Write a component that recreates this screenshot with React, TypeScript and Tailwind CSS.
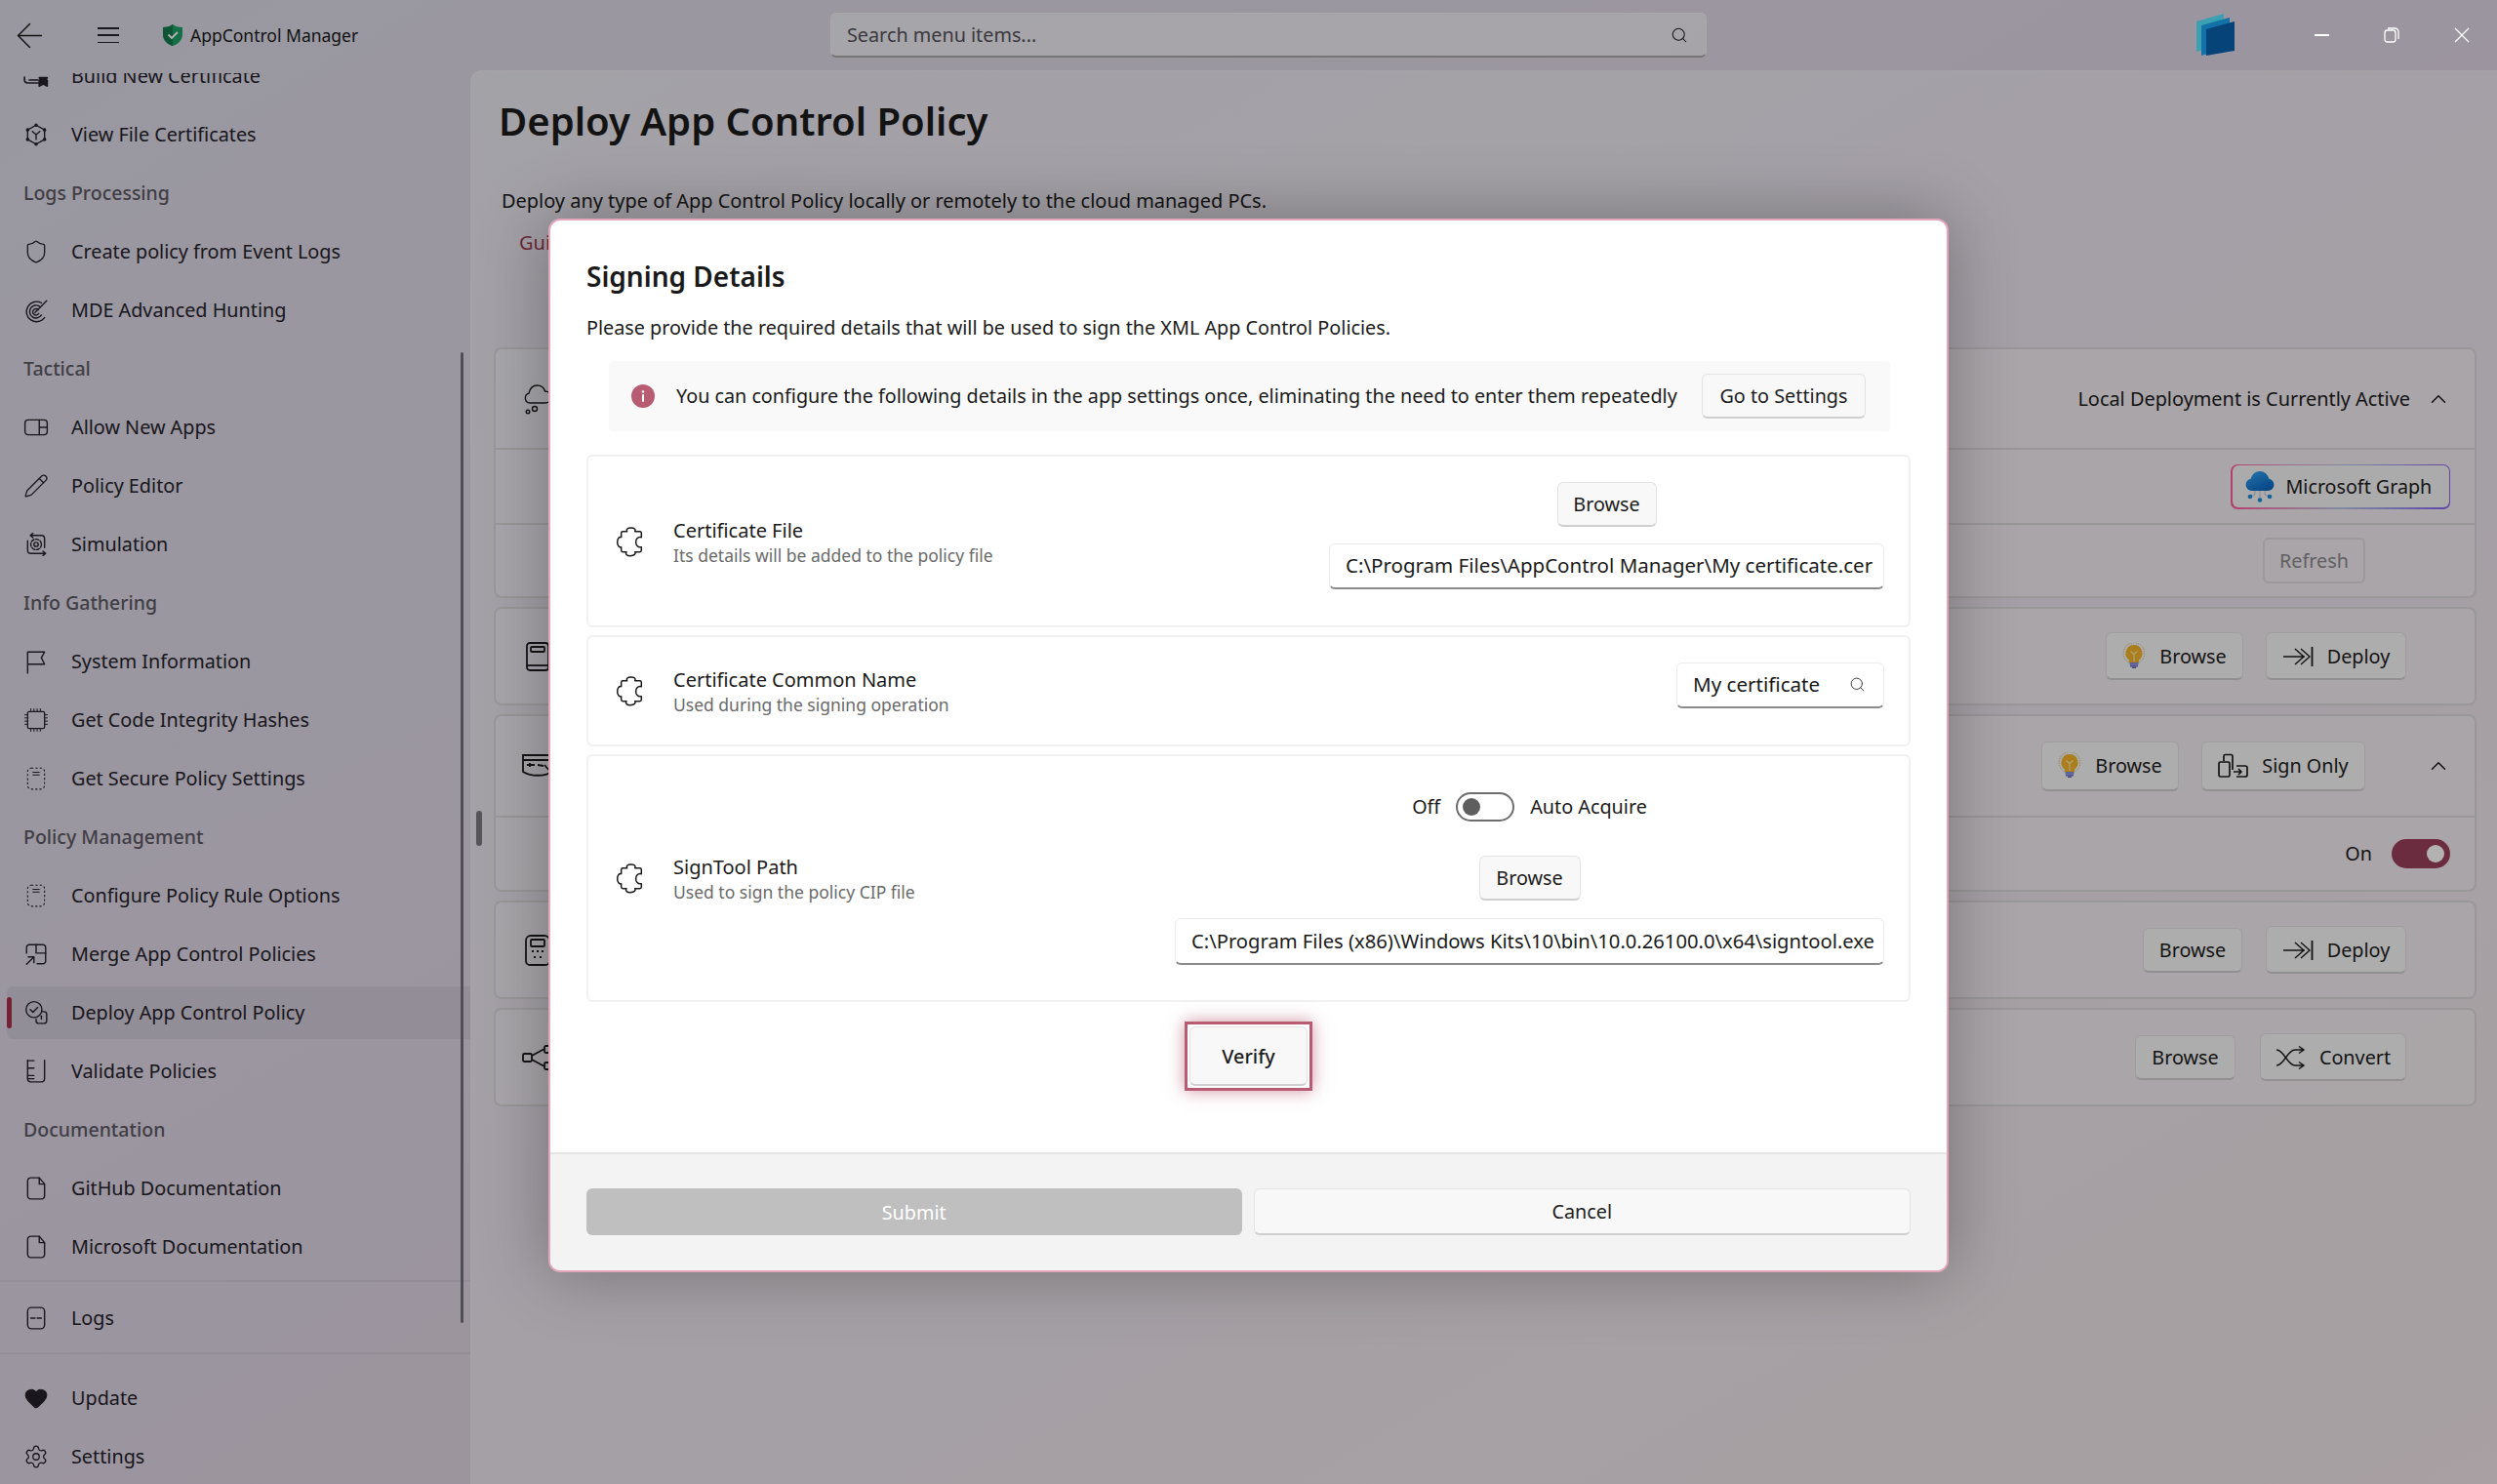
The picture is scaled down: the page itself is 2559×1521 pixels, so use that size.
import type { ReactNode } from "react";
import { ArrowLeft, ChevronUp, Heart, Pencil, Search, Settings, Shield } from "lucide-react";

const Ico = ({ children, size = 26, sw = 1.3 }: { children: ReactNode; size?: number; sw?: number }) => (
  <svg width={size} height={size} viewBox="0 0 24 24" fill="none" stroke="currentColor" strokeWidth={sw} strokeLinecap="round" strokeLinejoin="round" className="shrink-0">
    {children}
  </svg>
);

const CertClip = () => (
  <Ico sw={1.5}>
    <path d="M1 13v2.500a3 3 0 0 0 3 3h11" />
    <path d="M5.500 15.700h8.500" />
    <path d="M15 13.500h7.500l-1.500 2.500h1.500v5.500l-3.700-2-3.800 2V16h1.500z" fill="currentColor" />
  </Ico>
);
const CertHex = () => (
  <Ico>
    <path d="M12 3l8 4.500v9L12 21l-8-4.500v-9z" />
    <circle cx="12" cy="3" r="1" /><circle cx="20" cy="7.500" r="1" /><circle cx="20" cy="16.500" r="1" />
    <circle cx="12" cy="21" r="1" /><circle cx="4" cy="16.500" r="1" /><circle cx="4" cy="7.500" r="1" />
    <path d="M8.500 9l3.500 3 3.500-3M12 12v4.500" />
  </Ico>
);
const Radar = () => (
  <Ico>
    <path d="M17 5a9.500 9.500 0 1 0 3 14" />
    <path d="M15.500 8.500a6 6 0 1 0 1.500 8" />
    <path d="M14 11.500a3 3 0 1 0 .5 3.500" />
    <path d="M11 14L22 3" />
  </Ico>
);
const AppsBox = () => (
  <Ico>
    <rect x="1.500" y="5" width="21" height="14" rx="3" />
    <path d="M15 5v14M15 12h7.500" />
  </Ico>
);
const Sim = () => (
  <Ico>
    <path d="M20 15V6.500A3 3 0 0 0 17 3.500H7M9 1.500L6.500 3.500 9 5.500" />
    <path d="M4 8.500V17.500a3 3 0 0 0 3 3h13.500M18.500 18.500l2.500 2-2.500 2" />
    <circle cx="12" cy="12" r="2" />
    <circle cx="12" cy="12" r="5" strokeDasharray="3 1.500" />
  </Ico>
);
const Flag = () => (
  <Ico>
    <path d="M4 23V3h16l-3 5.500 3 6H4" />
  </Ico>
);
const Chip = () => (
  <Ico>
    <rect x="4" y="4" width="16" height="16" rx="1.500" strokeWidth="1.200" />
    <path d="M7 1v3M10 1v3M13 1v3M16 1v3M7 20v3M10 20v3M13 20v3M16 20v3M1 7h3M1 10h3M1 13h3M1 16h3M20 7h3M20 10h3M20 13h3M20 16h3" strokeWidth="0.900" strokeLinecap="butt" />
  </Ico>
);
const DashTablet = () => (
  <Ico sw={1}>
    <rect x="4" y="2" width="16" height="20" rx="3.500" strokeDasharray="2 2" strokeLinecap="butt" />
    <path d="M9 6h6M9 8.500h6" />
  </Ico>
);
const MergeIc = () => (
  <Ico>
    <path d="M3 11V5.500A2.500 2.500 0 0 1 5.500 3H18.500A2.500 2.500 0 0 1 21 5.500v13a2.500 2.500 0 0 1-2.500 2.500H13" />
    <path d="M12 3v8h9M3 21.500l7-7M4.500 14.500H10V20" />
  </Ico>
);
const DeployIc = () => (
  <Ico>
    <circle cx="10" cy="9" r="7.500" />
    <path d="M6.500 9l2.500 2.500 4.500-4.500" />
    <path d="M18 11h1.500A2.500 2.500 0 0 1 22 13.500v6a2.500 2.500 0 0 1-2.500 2.500h-5a2.500 2.500 0 0 1-2.500-2.500V18" />
    <path d="M17 15v3" />
  </Ico>
);
const ValidateIc = () => (
  <Ico>
    <path d="M4 1.500V19a3 3 0 0 0 3 3h10a3 3 0 0 0 3-3V1.500" />
    <path d="M4 2h6M4 9h6M4 16h6M4 19h6" />
  </Ico>
);
const DocIc = () => (
  <Ico>
    <path d="M7 2h8l5 6v11a3 3 0 0 1-3 3H7a3 3 0 0 1-3-3V5a3 3 0 0 1 3-3z" />
    <path d="M15 2v6h5" />
  </Ico>
);
const LogsIc = () => (
  <Ico>
    <rect x="4" y="2" width="16" height="20" rx="3.500" />
    <path d="M7 12h4M13 12h4" />
  </Ico>
);
const PuzzleIc = () => (
  <svg width="30" height="32" viewBox="33 38 90 96" fill="none" stroke="#1a1a1a" strokeWidth="4.500" strokeLinejoin="round" className="shrink-0">
    <path d="M50 60Q50 55 55 55H68C64 48 70 44 80 44C90 44 96 48 92 55H107Q112 55 112 60V73C100 70 95 80 95 88C95 96 100 106 112 103V113Q112 118 107 118H92C96 124 90 130 78 130C66 130 62 124 66 118H55Q50 118 50 113V103C44 106 38 98 38 88C38 78 44 70 50 73Z" />
  </svg>
);
const DeployArrow = () => (
  <svg width="32" height="22" viewBox="0 0 32 22" fill="none" stroke="currentColor" strokeWidth="1.400" className="shrink-0">
    <path d="M1 11h22M13 3l9 8-9 8M19 3l9 8-9 8" />
    <path d="M30.500 1v20" strokeWidth="1.800" />
  </svg>
);
const SignIc = () => (
  <svg width="31" height="26" viewBox="0 0 31 26" fill="none" stroke="currentColor" strokeWidth="1.700" strokeLinejoin="round" className="shrink-0">
    <rect x="1" y="9" width="11" height="15" rx="1.500" />
    <path d="M6 8V3a1.500 1.500 0 0 1 1.500-1.500h6A1.500 1.500 0 0 1 15 3v14" />
    <path d="M19 13h9a2 2 0 0 1 2 2v7a2 2 0 0 1-2 2h-9M16 19h8M21 16l3 3-3 3" />
  </svg>
);
const ShuffleIc = () => (
  <svg width="31" height="24" viewBox="0 0 31 24" fill="none" stroke="currentColor" strokeWidth="1.400" className="shrink-0">
    <path d="M1 4c8 0 11 16 19 16h9M1 20c8 0 11-16 19-16h9M24 0.500l5 3.500-5 3.500M24 16.500l5 3.500-5 3.500" />
  </svg>
);
const Bulb = () => (
  <svg width="24" height="28" viewBox="0 0 24 28" className="shrink-0">
    <circle cx="12" cy="10.500" r="10.800" fill="none" stroke="#c9a54a" strokeWidth="1" strokeDasharray="1 1.500" />
    <path d="M12 2a8.500 8.500 0 0 0-5 15.400V20h10v-2.600A8.500 8.500 0 0 0 12 2z" fill="#f4b52a" />
    <path d="M8.500 8.500l3.500 3 3.500-3M12 11.500V19" stroke="#fde9a8" strokeWidth="1.200" fill="none" />
    <rect x="7.500" y="20" width="9" height="2.500" fill="#8f8fe0" />
    <rect x="8" y="22.500" width="8" height="2" fill="#7474cc" />
    <rect x="10" y="24.500" width="4" height="1.500" fill="#6262b8" />
  </svg>
);
const GraphCloud = () => (
  <svg width="30" height="32" viewBox="0 0 30 32" className="shrink-0">
    <defs>
      <linearGradient id="cloudFill" x1="0" y1="0" x2="0.600" y2="1">
        <stop offset="0" stopColor="#35a8f5" />
        <stop offset="1" stopColor="#0b68c4" />
      </linearGradient>
    </defs>
    <path d="M10 19v3a3 3 0 0 1-3 3H5M15 19v9M20 19v3a3 3 0 0 0 3 3h2" stroke="#c4ced8" strokeWidth="1.200" fill="none" />
    <path d="M6.500 20a6.200 6.200 0 0 1-.8-12.300C7 3 10.500 0 15 0s8 3 9.300 7.700A6.200 6.200 0 0 1 23.500 20z" fill="url(#cloudFill)" />
    <circle cx="5" cy="26" r="2.300" fill="#1a8fdc" /><circle cx="15" cy="29.500" r="2.300" fill="#1a8fdc" /><circle cx="25" cy="26" r="2.300" fill="#1a8fdc" />
  </svg>
);

type NavRow = { label: string; icon?: ReactNode; active?: boolean };

const navRows: NavRow[] = [
  { label: "Build New Certificate", icon: <CertClip /> },
  { label: "View File Certificates", icon: <CertHex /> },
  { label: "Logs Processing" },
  { label: "Create policy from Event Logs", icon: <Shield size={26} strokeWidth={1.2} /> },
  { label: "MDE Advanced Hunting", icon: <Radar /> },
  { label: "Tactical" },
  { label: "Allow New Apps", icon: <AppsBox /> },
  { label: "Policy Editor", icon: <Pencil size={26} strokeWidth={1.2} /> },
  { label: "Simulation", icon: <Sim /> },
  { label: "Info Gathering" },
  { label: "System Information", icon: <Flag /> },
  { label: "Get Code Integrity Hashes", icon: <Chip /> },
  { label: "Get Secure Policy Settings", icon: <DashTablet /> },
  { label: "Policy Management" },
  { label: "Configure Policy Rule Options", icon: <DashTablet /> },
  { label: "Merge App Control Policies", icon: <MergeIc /> },
  { label: "Deploy App Control Policy", icon: <DeployIc />, active: true },
  { label: "Validate Policies", icon: <ValidateIc /> },
  { label: "Documentation" },
  { label: "GitHub Documentation", icon: <DocIc /> },
  { label: "Microsoft Documentation", icon: <DocIc /> },
];

const NavItem = ({ label, icon, active }: NavRow) => {
  if (!icon) {
    return <div className="h-[60px] shrink-0 flex items-center pl-[24px] text-[19.500px] font-medium text-[#5c5964]">{label}</div>;
  }
  return (
    <div className="relative h-[60px] shrink-0 flex items-center gap-[23px] pl-[24px] text-[19.800px] text-[#24222a]">
      {active && (
        <>
          <div className="absolute left-[7px] right-0 top-[3px] bottom-[3px] rounded-l-[6px] bg-black/5" />
          <div className="absolute left-[7px] top-[14px] bottom-[14px] w-[5px] rounded-full bg-[#a8324f]" />
        </>
      )}
      <span className="relative flex w-[26px] justify-center">{icon}</span>
      <span className="relative">{label}</span>
    </div>
  );
};

const Btn = ({ children, className = "" }: { children: ReactNode; className?: string }) => (
  <div className={`flex items-center justify-center gap-[14px] rounded-[6px] border border-[#e3e3e3] border-b-2 border-b-[#cfcfcf] bg-[#f8f8f8] pt-[1px] text-[19.800px] text-[#1c1c1c] ${className}`}>
    {children}
  </div>
);

const BgCard = ({ children }: { children: ReactNode }) => (
  <div className="rounded-[8px] border-2 border-[#ddd9dc] bg-white/30">{children}</div>
);

const BgRow = ({ children, className = "" }: { children: ReactNode; className?: string }) => (
  <div className={`flex items-center justify-end ${className}`}>{children}</div>
);

const LeftIc = ({ children }: { children: ReactNode }) => (
  <div className="mr-auto ml-[26px] flex w-[34px] justify-center text-[#1c1c1c]">{children}</div>
);

const SetRow = ({ title, desc, right, className, rightClass = "" }: { title: string; desc: string; right: ReactNode; className: string; rightClass?: string }) => (
  <div className={`flex items-center rounded-[6px] border-2 border-[#f1f1f1] pl-[28px] pr-[25px] ${className}`}>
    <PuzzleIc />
    <div className="ml-[29px] flex flex-col">
      <span className="text-[20px] leading-[28px] text-[#1b1b1b]">{title}</span>
      <span className="text-[17.500px] leading-[22px] text-[#6a6a6a]">{desc}</span>
    </div>
    <div className={`ml-auto flex flex-col items-end ${rightClass}`}>{right}</div>
  </div>
);

export default function App() {
  return (
    <div className="relative h-[1521px] w-[2559px] overflow-hidden bg-gradient-to-br from-[#dcdae6] via-[#dfd6e4] to-[#e8d4da] font-['Noto_Sans',sans-serif]">
      {/* title bar */}
      <header className="relative flex h-[72px] items-center text-[#1b1b1b]">
        <div className="flex w-[60px] justify-center"><ArrowLeft size={41} strokeWidth={0.85} /></div>
        <div className="ml-[40px] flex h-[16px] w-[22px] flex-col justify-between">
          <div className="h-[1.500px] bg-[#24222a]" />
          <div className="h-[1.500px] bg-[#24222a]" />
          <div className="h-[1.500px] bg-[#24222a]" />
        </div>
        <svg width="20" height="22" viewBox="0 0 20 22" className="ml-[45px] shrink-0">
          <path d="M10 0c2.500 2 5.500 3 10 3v7c0 6-4 10-10 12C4 20 0 16 0 10V3c4.500 0 7.500-1 10-3z" fill="#1fa065" />
          <path d="M10 0v22C4 20 0 16 0 10V3c4.500 0 7.500-1 10-3z" fill="#157a4c" />
          <path d="M5.500 10.500l3.500 3.500 6-6" stroke="#fff" strokeWidth="1.800" fill="none" />
        </svg>
        <span className="ml-[8px] w-[171px] whitespace-nowrap text-[17.500px]">AppControl Manager</span>
        <div className="ml-[485px] flex h-[46px] w-[898px] items-center justify-between rounded-[6px] border border-[#f2f2f2] border-b-2 border-b-[#a8a8a8] bg-white/50 pl-[16px] pr-[18px] text-[19.800px] text-[#55525a]">
          Search menu items...
          <Search size={18} strokeWidth={1.4} className="text-[#222]" />
        </div>
        <svg width="40" height="44" viewBox="0 0 40 44" className="absolute left-[2250px] top-[13px]">
          <path d="M1 9l28-8v31L1 40z" fill="#54e6ff" />
          <path d="M6 13l29-8v31L6 44z" fill="#1aa3f0" />
          <path d="M11 17l29-8v30l-29 5z" fill="#0a60ae" />
        </svg>
      </header>

      {/* window buttons sit above the smoke layer */}
      <div className="absolute right-0 top-0 z-20 flex h-[72px] text-white">
        <div className="flex w-[72px] items-center justify-center"><div className="h-[2px] w-[15px] bg-white" /></div>
        <div className="flex w-[72px] items-center justify-center">
          <svg width="16" height="16" viewBox="0 0 16 16" fill="none" stroke="currentColor" strokeWidth="1.300">
            <rect x="1" y="3" width="11" height="12" rx="2.500" />
            <path d="M4 1h7.500A3.500 3.500 0 0 1 15 4.500V12" />
          </svg>
        </div>
        <div className="flex w-[72px] items-center justify-center">
          <svg width="16" height="16" viewBox="0 0 16 16" stroke="currentColor" strokeWidth="1.300"><path d="M1 1l14 14M15 1L1 15" /></svg>
        </div>
      </div>

      <div className="flex h-[1449px]">
        {/* sidebar */}
        <aside className="relative flex w-[482px] shrink-0 flex-col pt-[3px]">
          <div className="h-[1237px] shrink-0 overflow-hidden">
            <div className="-mt-[27px]">
              {navRows.map((row) => (
                <NavItem key={row.label} {...row} />
              ))}
            </div>
          </div>
          <div className="h-[2px] shrink-0 bg-black/5" />
          <div className="mt-[7px] shrink-0"><NavItem label="Logs" icon={<LogsIc />} /></div>
          <div className="mt-[5px] h-[2px] shrink-0 bg-black/5" />
          <div className="mt-[15px] shrink-0"><NavItem label="Update" icon={<Heart size={26} fill="currentColor" strokeWidth={1} />} /></div>
          <NavItem label="Settings" icon={<Settings size={26} strokeWidth={1.2} />} />
          <div className="absolute left-[472px] top-[289px] h-[995px] w-[3px] rounded-full bg-[#74717c]" />
          <div className="absolute left-[488px] top-[759px] h-[36px] w-[6px] rounded-full bg-[#7d7a80]" />
        </aside>

        {/* page behind the dialog */}
        <main className="flex-1 rounded-tl-[12px] border-l-2 border-t-2 border-white/10 bg-white/40 pl-[22px] pr-[21px] text-[#1c1c1c]">
          <h1 className="mt-[20px] ml-[5px] h-[60px] text-[40px] font-semibold leading-[60px]">Deploy App Control Policy</h1>
          <p className="mt-[37px] ml-[8px] h-[30px] text-[19.950px] leading-[30px]">Deploy any type of App Control Policy locally or remotely to the cloud managed PCs.</p>
          <p className="mt-[13px] ml-[26px] h-[30px] text-[20px] leading-[30px] text-[#9c3a50]">Guide</p>

          <div className="mt-[92px] flex flex-col gap-[9px]">
            <BgCard>
              <BgRow className="h-[101px] gap-[16px] pr-[24px]">
                <LeftIc>
                  <svg width="30" height="34" viewBox="0 0 30 34" fill="none" stroke="currentColor" strokeWidth="1.400">
                    <path d="M7 21a5 5 0 0 1-1-9.800C7 6 10 3 14.500 3c4 0 7 2.500 8 6 3.500 0 6 2.500 6 6s-2.500 6-6 6z" />
                    <circle cx="12" cy="27" r="2.500" /><circle cx="5" cy="30" r="1.800" />
                  </svg>
                </LeftIc>
                <span className="text-[19.900px]">Local Deployment is Currently Active</span>
                <ChevronUp size={26} strokeWidth={1.4} />
              </BgRow>
              <BgRow className="h-[77px] border-t-2 border-[#ddd9dc] pr-[25px]">
                <div className="rounded-[7px] bg-gradient-to-r from-[#ff5c9c] via-[#b9c6e8] to-[#8a63ee] p-[1.500px]">
                  <div className="flex h-[43px] w-[222px] items-center gap-[12px] rounded-[6px] bg-[#f6f5f6] pl-[13px] text-[19.700px]">
                    <GraphCloud />
                    Microsoft Graph
                  </div>
                </div>
              </BgRow>
              <BgRow className="h-[75px] border-t-2 border-[#ddd9dc] pr-[112px]">
                <div className="flex h-[47px] w-[105px] items-center justify-center rounded-[6px] border-2 border-[#dfdcdf] text-[19.800px] text-[#8b8a8c]">Refresh</div>
              </BgRow>
            </BgCard>
            <BgCard>
              <BgRow className="h-[97px] gap-[23px] pr-[70px]">
                <LeftIc>
                  <svg width="26" height="30" viewBox="0 0 26 30" fill="none" stroke="currentColor" strokeWidth="1.800">
                    <rect x="2" y="1" width="22" height="28" rx="3" />
                    <rect x="6" y="5" width="14" height="5" rx="1" />
                    <path d="M2 24h22" />
                  </svg>
                </LeftIc>
                <Btn className="h-[49px] w-[141px]"><Bulb />Browse</Btn>
                <Btn className="h-[49px] w-[144px]"><DeployArrow />Deploy</Btn>
              </BgRow>
            </BgCard>
            <BgCard>
              <BgRow className="h-[102px] gap-[23px] pr-[24px]">
                <LeftIc>
                  <svg width="34" height="26" viewBox="0 0 34 26" fill="none" stroke="currentColor" strokeWidth="1.800">
                    <path d="M2 2h30v17c-8 5-22 5-30 0z" />
                    <path d="M2 7h30M6 12h8M9 10v4M17 12l6 1M24 12l6 7" />
                  </svg>
                </LeftIc>
                <Btn className="h-[51px] w-[141px]"><Bulb />Browse</Btn>
                <Btn className="h-[51px] w-[168px]"><SignIc />Sign Only</Btn>
                <div className="ml-[39px] flex w-[26px] justify-center"><ChevronUp size={26} strokeWidth={1.4} /></div>
              </BgRow>
              <BgRow className="h-[76px] gap-[20px] border-t-2 border-[#ddd9dc] pr-[25px]">
                <span className="text-[19.800px]">On</span>
                <div className="flex h-[30px] w-[60px] items-center justify-end rounded-full bg-[#99405a] pr-[6px]">
                  <div className="h-[18px] w-[18px] rounded-full bg-white" />
                </div>
              </BgRow>
            </BgCard>
            <BgCard>
              <BgRow className="h-[97px] gap-[24px] pr-[70px]">
                <LeftIc>
                  <svg width="26" height="32" viewBox="0 0 26 32" fill="none" stroke="currentColor" strokeWidth="1.800">
                    <path d="M6 1h14a5 5 0 0 1 5 5v21a4 4 0 0 1-4 4H5a4 4 0 0 1-4-4V6a5 5 0 0 1 5-5z" />
                    <rect x="6" y="5" width="14" height="7" rx="1" />
                    <path d="M7 17h2M12 17h2M17 17h2M9 23h2M15 23h2" strokeWidth="2.200" />
                  </svg>
                </LeftIc>
                <Btn className="h-[46px] w-[102px]">Browse</Btn>
                <Btn className="h-[49px] w-[144px]"><DeployArrow />Deploy</Btn>
              </BgRow>
            </BgCard>
            <BgCard>
              <BgRow className="h-[97px] gap-[25px] pr-[70px]">
                <LeftIc>
                  <svg width="32" height="26" viewBox="0 0 32 26" fill="none" stroke="currentColor" strokeWidth="1.800">
                    <rect x="1" y="9" width="9" height="8" rx="1.500" />
                    <rect x="23" y="1" width="9" height="7" rx="1.500" />
                    <rect x="23" y="18" width="9" height="7" rx="1.500" />
                    <path d="M10 11l13-7M10 15l13 7" />
                  </svg>
                </LeftIc>
                <Btn className="h-[46px] w-[103px]">Browse</Btn>
                <Btn className="h-[49px] w-[150px]"><ShuffleIc />Convert</Btn>
              </BgRow>
            </BgCard>
          </div>
        </main>
      </div>

      {/* smoke layer */}
      <div className="absolute inset-0 z-10 bg-black/30" />

      {/* dialog */}
      <div className="absolute left-[562px] top-[224px] z-20 flex h-[1080px] w-[1435px] flex-col overflow-hidden rounded-[12px] border-2 border-[#e3a6bb] bg-white shadow-[0_0_70px_rgba(0,0,0,0.3)]">
        <div className="flex flex-1 flex-col pl-[37px] pr-[37px] pt-[37px]">
          <h2 className="h-[40px] text-[28px] font-semibold leading-[40px] text-[#1a1a1a]">Signing Details</h2>
          <p className="mt-[18px] h-[30px] text-[19.800px] leading-[30px] text-[#1a1a1a]">Please provide the required details that will be used to sign the XML App Control Policies.</p>
          <div className="mt-[19px] ml-[23px] mr-[21px] flex h-[72px] items-center rounded-[4px] bg-[#f9f9f9] pl-[23px] pr-[25px] text-[19.750px] text-[#1a1a1a]">
            <div className="flex h-[24px] w-[24px] items-center justify-center rounded-full bg-[#b85c74]">
              <svg width="4" height="12" viewBox="0 0 4 12" fill="#fff"><circle cx="2" cy="1.500" r="1.300" /><rect x="1" y="4" width="2" height="8" rx="1" /></svg>
            </div>
            <span className="ml-[22px]">You can configure the following details in the app settings once, eliminating the need to enter them repeatedly</span>
            <Btn className="ml-auto h-[46px] w-[168px]">Go to Settings</Btn>
          </div>

          <div className="mt-[24px] flex flex-col gap-[8px]">
            <SetRow
              title="Certificate File"
              desc="Its details will be added to the policy file"
              className="h-[177px]"
              rightClass="mb-[12px]"
              right={
                <>
                  <div className="flex w-[569px] justify-center"><Btn className="h-[46px] w-[102px]">Browse</Btn></div>
                  <div className="mt-[17px] flex h-[47px] w-[569px] items-center overflow-hidden whitespace-nowrap rounded-[6px] border border-[#ececec] border-b-2 border-b-[#8a8a8a] pl-[16px] text-[20.500px] text-[#1a1a1a]">
                    C:\Program Files\AppControl Manager\My certificate.cer
                  </div>
                </>
              }
            />
            <SetRow
              title="Certificate Common Name"
              desc="Used during the signing operation"
              className="h-[114px]"
              rightClass="mb-[12px]"
              right={
                <div className="flex h-[47px] w-[213px] items-center justify-between rounded-[6px] border border-[#ececec] border-b-2 border-b-[#8a8a8a] pl-[16px] pr-[18px] text-[20.600px] text-[#1a1a1a]">
                  My certificate
                  <Search size={17} strokeWidth={1.3} className="text-[#333]" />
                </div>
              }
            />
            <SetRow
              title="SignTool Path"
              desc="Used to sign the policy CIP file"
              className="h-[254px]"
              right={
                <>
                  <div className="flex w-[727px] items-center justify-center text-[19.800px] text-[#1a1a1a]">
                    <span>Off</span>
                    <div className="mx-[16px] flex h-[30px] w-[60px] items-center rounded-full border-2 border-[#6d6d6d] pl-[5px]">
                      <div className="h-[18px] w-[18px] rounded-full bg-[#5e5e5e]" />
                    </div>
                    <span>Auto Acquire</span>
                  </div>
                  <div className="mt-[35px] flex w-[727px] justify-center"><Btn className="h-[46px] w-[104px]">Browse</Btn></div>
                  <div className="mt-[18px] flex h-[48px] w-[727px] items-center overflow-hidden whitespace-nowrap rounded-[6px] border border-[#ececec] border-b-2 border-b-[#8a8a8a] pl-[16px] text-[20.200px] text-[#1a1a1a]">
                    C:\Program Files (x86)\Windows Kits\10\bin\10.0.26100.0\x64\signtool.exe
                  </div>
                </>
              }
            />
          </div>

          <div className="mt-[20px] flex justify-center">
            <div className="border-[3px] border-[#b85c74] p-[2px] shadow-[0_0_16px_rgba(184,92,116,0.65)]">
              <Btn className="h-[61px] w-[121px] font-medium">Verify</Btn>
            </div>
          </div>
        </div>

        <div className="flex h-[121px] gap-[12px] border-t-2 border-[#e5e5e5] bg-[#f3f3f3] pl-[37px] pr-[37px] pt-[35px]">
          <div className="flex h-[48px] flex-1 items-center justify-center rounded-[6px] bg-[#bfbfbf] pt-[1px] text-[19.800px] text-white">Submit</div>
          <Btn className="h-[48px] flex-1">Cancel</Btn>
        </div>
      </div>
    </div>
  );
}
